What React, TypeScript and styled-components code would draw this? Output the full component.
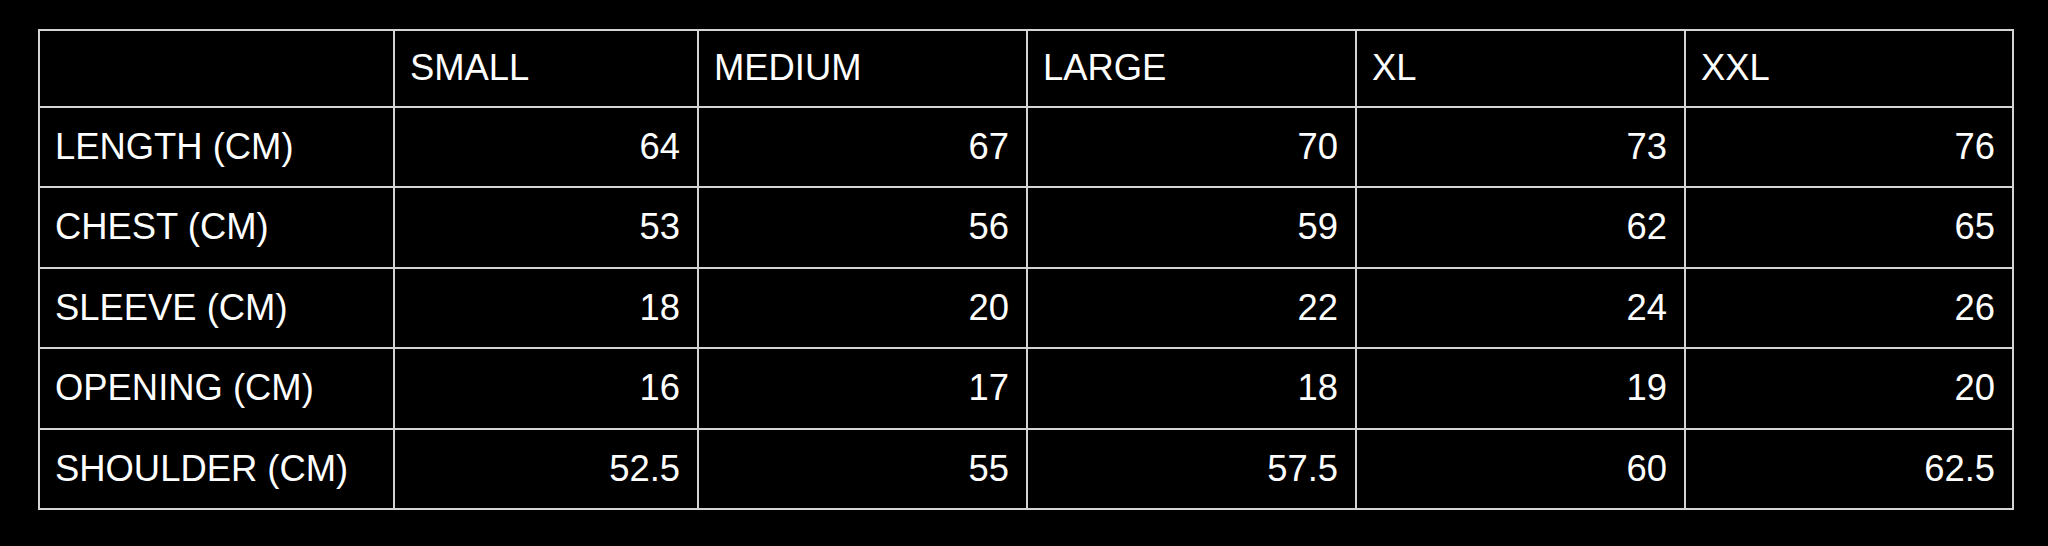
import React from "react";
import styled, { createGlobalStyle } from "styled-components";

const GlobalStyle = createGlobalStyle`
  html, body {
    margin: 0;
    padding: 0;
    background: #000;
  }
  body {
    font-family: "Liberation Sans", Arial, Helvetica, sans-serif;
    color: #fff;
  }
`;

const Page = styled.div`
  width: 2048px;
  height: 546px;
  background: #000;
  padding: 29px 0 0 38px;
  box-sizing: border-box;
`;

const Table = styled.table`
  border-collapse: collapse;
  table-layout: fixed;
  width: 1974px;
  font-family: "Liberation Sans", Arial, Helvetica, sans-serif;
  font-size: 36.4px;
  color: #fff;
`;

const HeadRow = styled.tr`
  height: 76.5px;
`;

const BodyRow = styled.tr`
  height: 80.5px;
`;

const Cell = styled.td<{ $align?: "left" | "right" }>`
  border: 2px solid #d4d4d4;
  padding: 0 17px 0 15px;
  text-align: ${(p) => p.$align ?? "left"};
  vertical-align: middle;
  white-space: nowrap;
  line-height: 1;
`;

const sizes = ["SMALL", "MEDIUM", "LARGE", "XL", "XXL"];
const widths = [355, 304, 329, 329, 329, 328];

const rows: [string, string[]][] = [
  ["LENGTH (CM)", ["64", "67", "70", "73", "76"]],
  ["CHEST (CM)", ["53", "56", "59", "62", "65"]],
  ["SLEEVE (CM)", ["18", "20", "22", "24", "26"]],
  ["OPENING (CM)", ["16", "17", "18", "19", "20"]],
  ["SHOULDER (CM)", ["52.5", "55", "57.5", "60", "62.5"]],
];

export default function App() {
  return (
    <>
      <GlobalStyle />
      <Page>
        <Table>
          <colgroup>
            {widths.map((w, i) => (
              <col key={i} style={{ width: w }} />
            ))}
          </colgroup>
          <thead>
            <HeadRow>
              <Cell />
              {sizes.map((s) => (
                <Cell key={s}>{s}</Cell>
              ))}
            </HeadRow>
          </thead>
          <tbody>
            {rows.map(([label, vals]) => (
              <BodyRow key={label}>
                <Cell>{label}</Cell>
                {vals.map((v, i) => (
                  <Cell key={i} $align="right">
                    {v}
                  </Cell>
                ))}
              </BodyRow>
            ))}
          </tbody>
        </Table>
      </Page>
    </>
  );
}
